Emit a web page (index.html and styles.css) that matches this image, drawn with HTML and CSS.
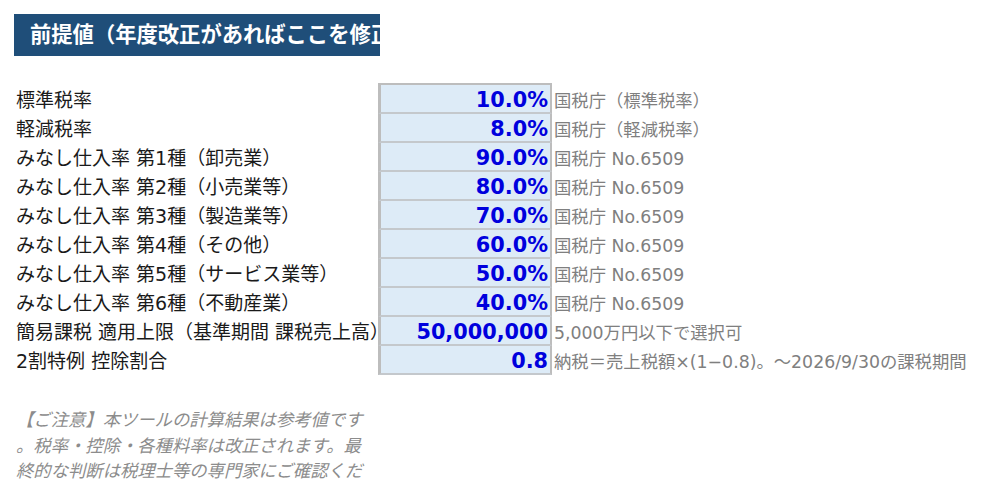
FILE: index.html
```html
<!DOCTYPE html>
<html lang="ja">
<head>
<meta charset="utf-8">
<title>前提値</title>
<link rel="stylesheet" href="styles.css">
</head>
<body>
<div class="page">
  <div class="title-bar">前提値（年度改正があればここを修正）</div>
  <div class="sheet">
    <div class="label">標準税率</div><div class="value first">10.0%</div><div class="note">国税庁（標準税率）</div>
    <div class="label">軽減税率</div><div class="value">8.0%</div><div class="note">国税庁（軽減税率）</div>
    <div class="label">みなし仕入率 第1種（卸売業）</div><div class="value">90.0%</div><div class="note">国税庁 No.6509</div>
    <div class="label">みなし仕入率 第2種（小売業等）</div><div class="value">80.0%</div><div class="note">国税庁 No.6509</div>
    <div class="label">みなし仕入率 第3種（製造業等）</div><div class="value">70.0%</div><div class="note">国税庁 No.6509</div>
    <div class="label">みなし仕入率 第4種（その他）</div><div class="value">60.0%</div><div class="note">国税庁 No.6509</div>
    <div class="label">みなし仕入率 第5種（サービス業等）</div><div class="value">50.0%</div><div class="note">国税庁 No.6509</div>
    <div class="label">みなし仕入率 第6種（不動産業）</div><div class="value">40.0%</div><div class="note">国税庁 No.6509</div>
    <div class="label">簡易課税 適用上限（基準期間 課税売上高）</div><div class="value">50,000,000</div><div class="note">5,000万円以下で選択可</div>
    <div class="label">2割特例 控除割合</div><div class="value">0.8</div><div class="note">納税＝売上税額×(1−0.8)。〜2026/9/30の課税期間</div>
  </div>
  <p class="caution">【ご注意】本ツールの計算結果は参考値です。税率・控除・各種料率は改正されます。最終的な判断は税理士等の専門家にご確認ください。</p>
</div>
</body>
</html>
```

FILE: styles.css
```css
html, body {
  margin: 0;
  padding: 0;
  background: #ffffff;
}

body {
  font-family: "DejaVu Sans", "Noto Sans CJK JP", sans-serif;
  color: #1a1a1a;
}

.page {
  padding: 14px 0 0 0;
}

.title-bar {
  margin-left: 14px;
  width: 350px;
  height: 42px;
  padding-left: 16px;
  background: #1f4e79;
  color: #ffffff;
  font-size: 21.3px;
  font-weight: bold;
  line-height: 42px;
  white-space: nowrap;
  overflow: hidden;
}

.sheet {
  margin-top: 27px;
  margin-left: 16px;
  display: grid;
  grid-template-columns: 362px 174px auto;
  grid-template-rows: 31px repeat(9, 29px);
}

.label {
  font-size: 19px;
  line-height: 1.2;
  white-space: nowrap;
  display: flex;
  align-items: flex-end;
  padding-bottom: 2px;
}

.value {
  background: #ddebf7;
  border-left: 3px solid #bdbdbd;
  border-right: 2px solid #bdbdbd;
  border-bottom: 2px solid #c4c8cc;
  color: #0000dd;
  font-weight: bold;
  font-size: 20.8px;
  display: flex;
  align-items: flex-end;
  justify-content: flex-end;
  padding-right: 2px;
}

.value.first {
  border-top: 2px solid #bdbdbd;
}

.note {
  font-size: 17.33px;
  line-height: 1.2;
  color: #7f7f7f;
  white-space: nowrap;
  display: flex;
  align-items: flex-end;
  padding-left: 2px;
  padding-bottom: 2px;
}

.caution {
  margin: 33px 0 0 16px;
  width: 352px;
  height: 77px;
  overflow: hidden;
  font-size: 17.33px;
  line-height: 25.5px;
  font-style: italic;
  color: #8c8c8c;
  line-break: anywhere;
  word-break: break-all;
}
```
